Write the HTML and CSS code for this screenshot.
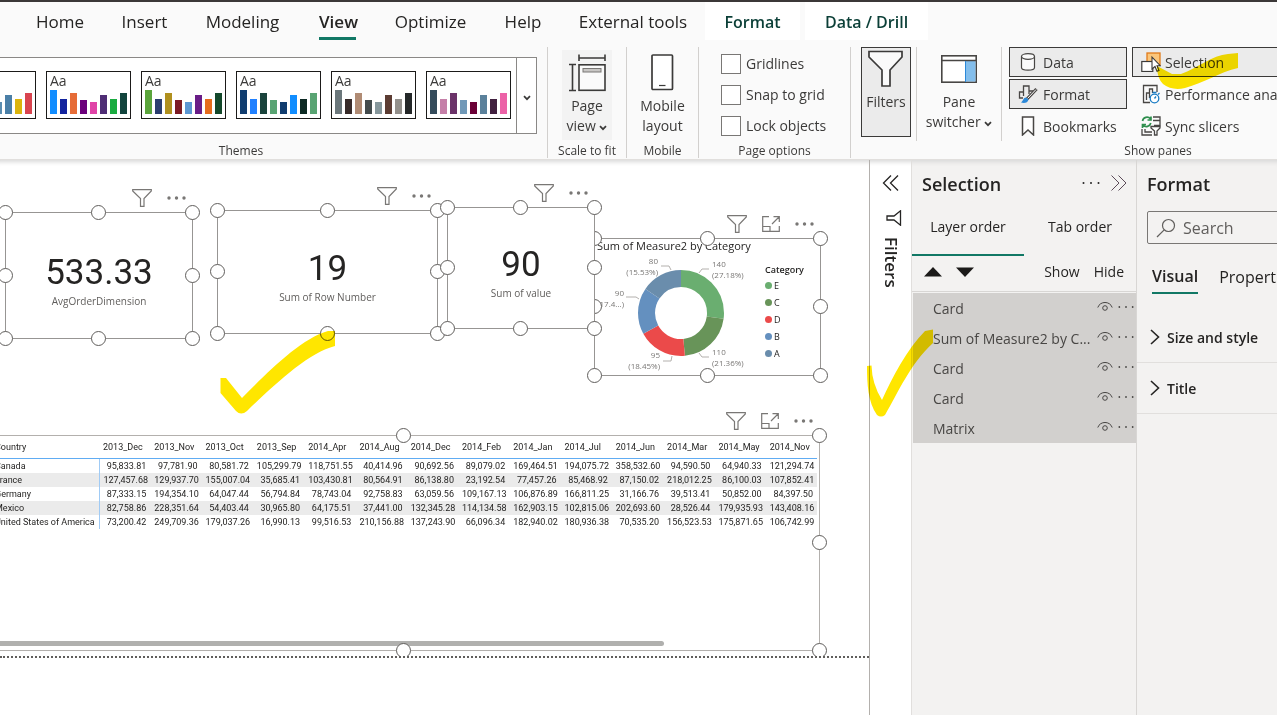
FILE: index.html
```html
<!DOCTYPE html>
<html lang="en">
<head>
<meta charset="utf-8">
<title>Report editor</title>
<link rel="stylesheet" href="styles.css">
</head>
<body>
<svg class="defs" aria-hidden="true">
  <symbol id="funnel" viewBox="0 0 20 18"><path d="M.7.7H19.3V2L12 9.500V17.300H8.500V9.500L.7 2Z" fill="#fff" stroke="currentColor" stroke-width="1.200"/></symbol>
  <symbol id="focus" viewBox="0 0 18 16"><path d="M7 .7H.7V15.300H17.300V10M11.500.7H17.300V6M17 1L10 8M.7 10.500H8V15" fill="none" stroke="currentColor" stroke-width="1.200"/></symbol>
  <symbol id="dots" viewBox="0 0 19 4"><g fill="currentColor"><circle cx="2" cy="2" r="1.700"/><circle cx="9.500" cy="2" r="1.700"/><circle cx="17" cy="2" r="1.700"/></g></symbol>
  <symbol id="smalldots" viewBox="0 0 18 4"><g fill="currentColor"><circle cx="1.500" cy="2" r="1"/><circle cx="9" cy="2" r="1"/><circle cx="16.500" cy="2" r="1"/></g></symbol>
  <symbol id="eye" viewBox="0 0 16 12"><path d="M.8 6.500C3-.2 13-.2 15.200 6.500" fill="none" stroke="currentColor"/><circle cx="8" cy="7" r="2.300" fill="none" stroke="currentColor"/></symbol>
  <symbol id="down" viewBox="0 0 8 6"><path d="M1 1.200L4 4.200L7 1.200" fill="none" stroke="currentColor" stroke-width="1.700"/></symbol>
  <symbol id="right" viewBox="0 0 10 16"><path d="M1 1L8.500 8L1 15" fill="none" stroke="currentColor" stroke-width="1.600"/></symbol>
</svg>

<nav class="tabs">
  <button class="tab">Home</button>
  <button class="tab">Insert</button>
  <button class="tab">Modeling</button>
  <button class="tab active"><span>View</span></button>
  <button class="tab">Optimize</button>
  <button class="tab">Help</button>
  <button class="tab">External tools</button>
  <button class="tab context">Format</button>
  <button class="tab context">Data / Drill</button>
</nav>

<section class="ribbon">
  <div class="group themes">
    <div class="gallery">
      <div class="thumbs" id="thumbs"></div>
      <button class="more" aria-label="More themes"><svg width="8" height="6"><use href="#down"/></svg></button>
    </div>
    <div class="label">Themes</div>
  </div>
  <div class="group scale">
    <button class="big hover">
      <svg width="38" height="38" viewBox="0 0 38 38" fill="none" stroke="#3b3a39" stroke-width="1.600"><path d="M11 .5V7M37 .5V7M11 4H37"/><path d="M1 10.500H8M1 36.500H8M4.500 10.500V36.500"/><rect x="11" y="10.800" width="26" height="25.500" fill="#fafafa"/><rect x="15" y="14.500" width="18" height="3.500" fill="#c8c6c4" stroke="#797775" stroke-width="1"/></svg>
      <span>Page<br>view <svg width="8" height="6"><use href="#down"/></svg></span>
    </button>
    <div class="label">Scale to fit</div>
  </div>
  <div class="group mobile">
    <button class="big">
      <svg width="24" height="38" viewBox="0 0 24 38" fill="none" stroke="#3b3a39" stroke-width="1.700"><rect x="1" y="1" width="20.500" height="34.500" rx="1" fill="#fff"/><path d="M8 31.500H14.500" stroke-width="1.200"/></svg>
      <span>Mobile<br>layout</span>
    </button>
    <div class="label">Mobile</div>
  </div>
  <div class="group options">
    <div class="checks">
      <label><input type="checkbox">Gridlines</label>
      <label><input type="checkbox">Snap to grid</label>
      <label><input type="checkbox">Lock objects</label>
    </div>
    <div class="label">Page options</div>
  </div>
  <div class="group panes">
    <div class="pane-row">
      <button class="big pressed">
        <svg width="36" height="38" viewBox="0 0 36 38"><path d="M1 1.500H34V7L22 20V36H14V20L1 7Z" fill="#fafafa" stroke="#3b3a39" stroke-width="1.700"/></svg>
        <span>Filters</span>
      </button>
      <button class="big switcher">
        <svg width="36" height="30" viewBox="0 0 36 30"><rect x=".8" y="1.800" width="34.400" height="26.400" fill="#fff" stroke="#484644" stroke-width="1.600"/><path d="M25 7H34.500V27.500H25Z" fill="#83beec"/><path d="M1 6.500H35" stroke="#484644" stroke-width="1.500"/><path d="M24.500 7V28" stroke="#2b88d8"/></svg>
        <span>Pane<br>switcher <svg width="8" height="6"><use href="#down"/></svg></span>
      </button>
      <div class="toggles">
        <button class="toggle on"><svg width="20" height="20" viewBox="0 0 20 20" fill="#fafafa" stroke="#484644" stroke-width="1.200"><path d="M3.500 4.500V15.500C3.500 19 16.500 19 16.500 15.500V4.500"/><ellipse cx="10" cy="4.500" rx="6.500" ry="2.800"/></svg>Data</button>
        <button class="toggle on wide"><svg width="20" height="20" viewBox="0 0 20 20"><rect x="6" y="1" width="13" height="12" fill="#fbc67b" stroke="#e07b1a" stroke-width="1.300"/><rect x=".8" y="9.500" width="11" height="10" fill="#fff" stroke="#3b3a39" stroke-width="1.200"/><path d="M11 5V17L14 14.500L16 19.300L18 18.400L16 13.700H19.300Z" fill="#fff" stroke="#3b3a39" stroke-width="1.100"/></svg>Selection</button>
        <button class="toggle on"><svg width="20" height="20" viewBox="0 0 20 20"><path d="M5 14H1.500V8H5.500V2H11V7H15M5.500 8V12M11 7V10" fill="none" stroke="#484644" stroke-width="1.300"/><path d="M18.500 5L9 15" stroke="#484644" stroke-width="3.200"/><path d="M18 5.500L9.500 14.500" stroke="#fff"/><path d="M10.500 15.500C10 19 6 19.500 3 18.500C5.500 17 5 13.500 8 13.500Z" fill="#2b88d8"/></svg>Format</button>
        <button class="toggle wide"><svg width="20" height="20" viewBox="0 0 20 20" fill="none" stroke="#484644" stroke-width="1.300"><path d="M9 18.500H2.500V1.500H16V8M5.500 16V9H8.500V5H11.500V9M8.500 9V14"/><g stroke="#1a7cc4"><circle cx="13.500" cy="14.500" r="4.300" fill="#fff"/><path d="M13.500 14.500L15 12.500M11.500 8.500H15.500M17 10.500L18.500 9"/></g></svg>Performance analyzer</button>
        <button class="toggle"><svg width="20" height="20" viewBox="0 0 20 20"><path d="M4.500 1H15.500V19L10 14L4.500 19Z" fill="#fff" stroke="#484644" stroke-width="1.500"/></svg>Bookmarks</button>
        <button class="toggle wide"><svg width="20" height="20" viewBox="0 0 20 20" fill="none" stroke="#484644" stroke-width="1.300"><path d="M1 13V19H11M4 13V16H11M12 1H19V9.500H13M12 4.500H19"/><path d="M10 10.500H19V12L16 15V19H13.500V15L10 12Z" fill="#fff"/><path d="M1.500 5A4.500 4.500 0 0 1 9.500 3M10 .5V4H6.500M9.800 7A4.500 4.500 0 0 1 2 9M1.500 12V8.500H5" stroke="#2f8f4e" stroke-width="1.700"/></svg>Sync slicers</button>
      </div>
    </div>
    <div class="label">Show panes</div>
  </div>
</section>

<main class="workspace">
  <section class="canvas">
    <div class="page">
      <article class="visual matrix">
        <div class="tools"><svg width="20" height="18"><use href="#funnel"/></svg><svg width="18" height="16"><use href="#focus"/></svg><svg width="19" height="4"><use href="#dots"/></svg></div>
        <table>
          <thead><tr id="months"><th class="country">Country</th></tr></thead>
          <tbody id="rows"></tbody>
        </table>
        <div class="scroll"></div>
      </article>
      <article class="visual card one">
        <div class="tools"><svg width="20" height="18"><use href="#funnel"/></svg><svg width="19" height="4"><use href="#dots"/></svg></div>
        <div class="value">533.33</div><div class="caption">AvgOrderDimension</div>
      </article>
      <article class="visual card two">
        <div class="tools"><svg width="20" height="18"><use href="#funnel"/></svg><svg width="19" height="4"><use href="#dots"/></svg></div>
        <div class="value">19</div><div class="caption">Sum of Row Number</div>
      </article>
      <article class="visual chart">
        <div class="tools"><svg width="20" height="18"><use href="#funnel"/></svg><svg width="18" height="16"><use href="#focus"/></svg><svg width="19" height="4"><use href="#dots"/></svg></div>
        <h3>Sum of Measure2 by Category</h3>
        <svg class="donut" viewBox="594 238 227 137">
          <g fill="none" stroke-width="17" transform="rotate(-90 681 313)">
            <circle cx="681" cy="313" r="34.500" pathLength="100" stroke="#6aae70" stroke-dasharray="27.180 72.820"/>
            <circle cx="681" cy="313" r="34.500" pathLength="100" stroke="#689459" stroke-dasharray="21.360 78.640" stroke-dashoffset="-27.180"/>
            <circle cx="681" cy="313" r="34.500" pathLength="100" stroke="#eb4a4a" stroke-dasharray="18.450 81.550" stroke-dashoffset="-48.540"/>
            <circle cx="681" cy="313" r="34.500" pathLength="100" stroke="#6490bf" stroke-dasharray="17.480 82.520" stroke-dashoffset="-66.990"/>
            <circle cx="681" cy="313" r="34.500" pathLength="100" stroke="#6a8dac" stroke-dasharray="15.530 84.470" stroke-dashoffset="-84.470"/>
          </g>
          <g fill="none" stroke="#b3b0ad"><path d="M661 266H669L671 270M699 273L702 269H709M626 297H636L639 299M663 361H671L672 356M699 353L702 357H709"/></g>
          <g class="data">
            <text x="712" y="267">140</text><text x="712" y="278">(27.18%)</text>
            <text x="712" y="355">110</text><text x="712" y="366">(21.36%)</text>
            <text x="658" y="264" text-anchor="end">80</text><text x="658" y="275" text-anchor="end">(15.53%)</text>
            <text x="624" y="296" text-anchor="end">90</text><text x="624" y="307" text-anchor="end">(17.4...)</text>
            <text x="660" y="358" text-anchor="end">95</text><text x="660" y="369" text-anchor="end">(18.45%)</text>
          </g>
        </svg>
        <div class="legend"><b>Category</b>
          <span><i class="e"></i>E</span><span><i class="c"></i>C</span><span><i class="d"></i>D</span><span><i class="b"></i>B</span><span><i class="a"></i>A</span>
        </div>
      </article>
      <article class="visual card three">
        <div class="tools"><svg width="20" height="18"><use href="#funnel"/></svg><svg width="19" height="4"><use href="#dots"/></svg></div>
        <div class="value">90</div><div class="caption">Sum of value</div>
      </article>
    </div>
  </section>

  <aside class="filters">
    <button aria-label="Expand filters"><svg width="18" height="16" viewBox="0 0 18 16" fill="none" stroke="#252423" stroke-width="1.300"><path d="M9 .5L1.500 8L9 15.500M16 .5L8.500 8L16 15.500"/></svg></button>
    <svg class="side-funnel" width="16" height="16" viewBox="0 0 16 16"><path d="M14.500 .8V15.200L8 10H1V6H8Z" fill="none" stroke="#252423" stroke-width="1.300"/></svg>
    <span>Filters</span>
  </aside>

  <aside class="selection">
    <header><h2>Selection</h2>
      <button aria-label="More options"><svg width="18" height="4"><use href="#smalldots"/></svg></button>
      <button aria-label="Collapse"><svg width="16" height="16" viewBox="0 0 16 16" fill="none" stroke="#5b4a58"><path d="M.5 .5L8 8L.5 15.500M7.500 .5L15 8L7.500 15.500"/></svg></button>
    </header>
    <div class="order"><button class="current">Layer order</button><button>Tab order</button></div>
    <div class="actions">
      <button aria-label="Move up"><svg width="18" height="10"><path d="M0 9.500L9 0L18 9.500Z" fill="#1b1a19"/></svg></button>
      <button aria-label="Move down"><svg width="18" height="10"><path d="M0 .5L9 10L18 .5Z" fill="#1b1a19"/></svg></button>
      <button class="show">Show</button><button>Hide</button>
    </div>
    <ul>
      <li><span>Card</span><svg width="16" height="12"><use href="#eye"/></svg><svg width="16" height="4"><use href="#smalldots"/></svg></li>
      <li><span>Sum of Measure2 by C...</span><svg width="16" height="12"><use href="#eye"/></svg><svg width="16" height="4"><use href="#smalldots"/></svg></li>
      <li><span>Card</span><svg width="16" height="12"><use href="#eye"/></svg><svg width="16" height="4"><use href="#smalldots"/></svg></li>
      <li><span>Card</span><svg width="16" height="12"><use href="#eye"/></svg><svg width="16" height="4"><use href="#smalldots"/></svg></li>
      <li><span>Matrix</span><svg width="16" height="12"><use href="#eye"/></svg><svg width="16" height="4"><use href="#smalldots"/></svg></li>
    </ul>
  </aside>

  <aside class="format">
    <h2>Format</h2>
    <label class="search"><svg width="20" height="20" viewBox="0 0 20 20" fill="none" stroke="#605e5c" stroke-width="1.200"><circle cx="12.500" cy="7.500" r="6"/><path d="M8.200 11.800L1 19"/></svg><input type="text" placeholder="Search" aria-label="Search"></label>
    <div class="kinds"><button class="current">Visual</button><button>Properties</button></div>
    <button class="section"><svg width="10" height="16"><use href="#right"/></svg>Size and style</button>
    <button class="section"><svg width="10" height="16"><use href="#right"/></svg>Title</button>
  </aside>
</main>

<svg class="marks" width="1277" height="715" aria-hidden="true"><g fill="#ffe600">
  <path d="M220.500 378H226L242 398C268 372 300 339 328 331H335V346C308 353 275 384 247 411Q241 416 236 411L220.500 393Z"/>
  <path d="M1157 66L1172 74H1181C1198 68 1212 55 1228 54L1238 53V68C1220 72 1204 83 1185 88Q1172 91 1163 84Q1157 78 1157 66Z"/>
  <path d="M867 366L871.500 365.500Q872 384 882 400C892 378 907 349 925 331L933 329.500V343C910 364 898 393 885 415Q881 418 877 415C868 402 867 384 867 366Z"/>
</g></svg>
<script src="script.js"></script>
</body>
</html>
```

FILE: styles.css
```css
* { box-sizing: border-box; }
body { margin: 0; height: 100vh; display: flex; flex-direction: column; overflow: hidden; background: #fff; color: #252423; font-family: "Open Sans", "Noto Sans", sans-serif; font-size: 14px; }
button { font: inherit; color: inherit; background: none; border: 0; padding: 0; }
svg { flex: none; }
h2, h3, ul { margin: 0; padding: 0; }
.defs { position: absolute; width: 0; height: 0; }
.marks { position: absolute; left: 0; top: 0; pointer-events: none; mix-blend-mode: multiply; }

.tabs { flex: none; display: grid; grid-template-columns: 86px 83px 113px 77px 109px 76px 144px 95px 123px; padding-left: 17px; border-top: 2px solid #3b3838; background: #fafafa; height: 40px; font-size: 17px; }
.tab { white-space: nowrap; line-height: 40px; height: 38px; }
.tab.active { font-weight: 600; }
.tab.active span { display: block; height: 38px; margin: 0 20px; border-bottom: 3px solid #117865; }
.tab.context { background: #fff; font-size: 16px; font-weight: 600; color: #0b3f37; }
.tab.context:last-child { margin-left: 5px; margin-right: -5px; }

.ribbon { flex: none; display: flex; height: 120px; padding: 7px 0 1px; overflow: hidden; background: #fafafa; border-bottom: 1px solid #e1dfdd; color: #3b3a39; }
.group { flex: none; display: flex; flex-direction: column; justify-content: space-between; align-items: center; border-right: 1px solid #d2d0ce; }
.group:last-child { border: 0; }
.label { font-size: 12px; line-height: 14px; white-space: nowrap; }
.themes { width: 548px; }
.themes .label { align-self: flex-start; width: 482px; text-align: center; }
.gallery { align-self: stretch; display: flex; justify-content: flex-end; height: 77px; margin: 10px 10px 0 0; border: 1px solid #8a8886; border-left: 0; background: #fff; overflow: hidden; }
.thumbs { flex: none; display: flex; gap: 10px; padding: 13px 5px; }
.thumb { flex: none; width: 85px; height: 48px; border: 1px solid #1b1a19; padding: 2px 3px 4px; display: flex; flex-direction: column; justify-content: space-between; font-size: 14px; line-height: 14px; }
.bars { display: flex; align-items: flex-end; gap: 3px; height: 24px; }
.bars i { width: 7px; }
.more { flex: none; width: 20px; border-left: 1px solid #8a8886; }
.scale { width: 79px; }
.mobile { width: 72px; }
.options { width: 152px; }
.panes { width: 614px; }
.big { display: flex; flex-direction: column; align-items: center; gap: 4px; width: 50px; height: 90px; padding-top: 5px; line-height: 20px; white-space: nowrap; }
.hover { background: #f3f3f3; margin-top: 3px; padding-top: 4px; }
.mobile .big { margin-top: 3px; padding-top: 4px; }
.pressed { background: #ebebeb; border: 1px solid #3b3a39; padding-top: 2px; gap: 4px; }
.checks { align-self: stretch; display: flex; flex-direction: column; gap: 11px; padding: 7px 0 0 22px; }
.checks label { display: flex; align-items: center; gap: 5px; line-height: 20px; white-space: nowrap; }
.checks input { appearance: none; width: 20px; height: 20px; margin: 0; border: 1px solid #797775; background: #fff; }
.pane-row { display: flex; align-items: flex-start; align-self: stretch; padding-left: 10px; }
.pane-row .switcher { border: solid #d2d0ce; border-width: 0 1px; margin-left: 5px; width: 86px; height: 94px; padding-top: 7px; gap: 8px; }
.toggles { display: grid; grid-template-columns: 118px 318px; grid-auto-rows: 30px; gap: 2px 5px; padding-left: 7px; }
.toggle { display: flex; align-items: center; gap: 5px; padding-left: 8px; border: 1px solid transparent; white-space: nowrap; }
.toggle.on { background: #ebebeb; border-color: #3b3a39; }
.toggle.wide { gap: 4px; }

.workspace { flex: 1; min-height: 0; display: flex; }
.canvas { position: relative; flex: 1; min-width: 0; overflow: hidden; border-right: 1px solid #b3b0ad; box-shadow: inset 0 6px 4px -4px #d8d8d8; }
.page { position: relative; height: 498px; overflow: hidden; border-bottom: 2px dotted #605e5c; }
.visual { position: absolute; border: 1px solid #979593; background: #fff; }
.handle { position: absolute; width: 15px; height: 15px; margin: -8px; border: 1px solid #605e5c; border-radius: 50%; background: #fff; }
.hl { left: 0; } .hc { left: 50%; } .hr { left: 100%; margin-left: -7px; }
.ht { top: 0; } .hm { top: 50%; } .hb { top: 100%; margin-top: -7px; }
.tools { position: absolute; right: 6px; bottom: 100%; display: flex; align-items: center; gap: 15px; height: 31px; color: #797775; }
.card { display: flex; flex-direction: column; align-items: center; justify-content: center; padding-top: 10px; }
.one { left: 5px; top: 52px; width: 188px; height: 127px; }
.two { left: 217px; top: 50px; width: 221px; height: 124px; }
.three { left: 447px; top: 47px; width: 148px; height: 122px; }
.value { font: 35px/40px Roboto, sans-serif; }
.caption { font-size: 10px; line-height: 16px; color: #605e5c; }
.chart { left: 594px; top: 78px; width: 227px; height: 138px; }
.chart h3 { font-size: 11px; line-height: 14px; font-weight: 400; padding-left: 2px; white-space: nowrap; }
.donut { position: absolute; left: -1px; top: -1px; width: 227px; height: 137px; }
.data { font-size: 8px; fill: #797775; }
.legend { position: absolute; left: 170px; top: 24px; display: flex; flex-direction: column; font-size: 9px; line-height: 14px; }
.legend span { display: flex; align-items: center; gap: 2px; height: 17px; }
.legend b { font-weight: 600; }
.legend i { width: 7px; height: 7px; border-radius: 50%; }
.e { background: #6aae70; } .c { background: #689459; } .d { background: #eb4a4a; } .b { background: #6490bf; } .a { background: #6a8dac; }
.matrix { left: -12px; top: 275px; width: 832px; height: 216px; border-color: #b3b0ad; }
table { table-layout: fixed; border-collapse: collapse; width: 828px; font: 9px/12px Roboto, sans-serif; color: #252423; }
th, td { padding: 1px 4px; font-weight: 400; white-space: nowrap; text-align: right; }
th { text-align: left; height: 22px; border-bottom: 1px solid #60acf3; }
.country { width: 110px; padding-left: 6px; text-align: left; border-right: 1px solid #a0cbf5; }
th.country { border-right: 0; }
tbody tr:nth-child(even) { background: #ebebeb; }
.scroll { position: absolute; left: 0; bottom: 4px; width: 675px; height: 5px; border-radius: 3px; background: #b0b0ae; }

.filters { flex: none; width: 41px; display: flex; flex-direction: column; align-items: center; padding-top: 15px; gap: 19px; box-shadow: inset 0 6px 4px -4px #d8d8d8; }
.filters button { height: 16px; }
.side-funnel { margin-left: 6px; }
.filters span { writing-mode: vertical-rl; font-size: 17px; font-weight: 600; line-height: 20px; margin-top: -8px; }
.selection { flex: none; width: 226px; background: #f3f2f1; border-left: 1px solid #e1dfdd; border-right: 1px solid #d8d6d4; box-shadow: inset 0 6px 4px -4px #d8d8d8; }
.selection button svg { display: block; }
.selection header { display: flex; align-items: center; gap: 11px; height: 48px; padding: 0 9px 2px 10px; }
h2 { flex: 1; font-size: 18px; font-weight: 600; line-height: 48px; padding-top: 1px; }
.order { display: grid; grid-template-columns: 1fr 1fr; height: 48px; }
.order button { height: 48px; padding-bottom: 12px; }
.order .current { border-bottom: 2px solid #117865; padding-bottom: 10px; }
.actions { display: flex; align-items: center; gap: 14px; height: 36px; padding: 0 12px 4px; border-bottom: 1px solid #d8d6d4; }
.show { margin-left: auto; }
.selection ul { list-style: none; margin: 1px 0 0 1px; background: #d2d0ce; }
.selection li { display: flex; align-items: center; height: 30px; gap: 5px; padding: 0 2px 0 20px; color: #484644; white-space: nowrap; }
.selection li svg { margin-bottom: 2px; }
.selection li span { flex: 1; min-width: 0; overflow: hidden; }
.format { flex: none; width: 140px; overflow: hidden; background: #f3f2f1; box-shadow: inset 0 6px 4px -4px #d8d8d8; }
.format h2 { padding: 0 0 0 10px; }
.search { display: flex; align-items: center; gap: 5px; width: 190px; height: 33px; margin: 3px 0 0 10px; padding-left: 8px; border: 1px solid #797775; border-radius: 2px; }
.search input { border: 0; background: none; font: inherit; font-size: 16px; width: 130px; }
.search input::placeholder { color: #605e5c; opacity: 1; }
.kinds { display: flex; gap: 21px; height: 68px; padding: 16px 0 0 15px; font-size: 16px; }
.kinds button { height: 34px; white-space: nowrap; }
.kinds .current { font-weight: 600; border-bottom: 2px solid #117865; }
.section { display: flex; align-items: center; gap: 7px; width: 200px; height: 51px; padding-left: 13px; border-bottom: 1px solid #e1dfdd; font-weight: 600; }
```

FILE: script.js
```javascript
const palettes = [
  ["#118dff", "#12239e", "#e66c37", "#6b007b", "#5b8db0", "#4a7fa7", "#dbb40c", "#d9444f"],
  ["#118dff", "#12239e", "#e66c37", "#6b007b", "#e044a7", "#4f2d75", "#1aab40", "#12443d"],
  ["#5aa43b", "#2b3d6f", "#b0901e", "#7b1b25", "#5b97d3", "#691d87", "#e66c1c", "#14482b"],
  ["#103c6e", "#2080ff", "#1a433c", "#59a473", "#103c6e", "#118dff", "#0c2923", "#59a473"],
  ["#6b777b", "#372a29", "#b08b74", "#434b4d", "#86979c", "#5c3c33", "#93908c", "#252829"],
  ["#344b5b", "#c57fa8", "#6b3369", "#7099b8", "#6b0036", "#5b819b", "#41203f", "#ec62a7"]
];
const heights = [24, 15, 21, 14, 12, 19, 15, 21];
document.getElementById("thumbs").innerHTML = palettes.map((p, n) =>
  `<div class="thumb">${n ? "Aa" : "<span></span>"}<div class="bars">${p.map((c, i) => `<i style="background:${c};height:${heights[i]}px"></i>`).join("")}</div></div>`).join("");

const months = "2013_Dec 2013_Nov 2013_Oct 2013_Sep 2014_Apr 2014_Aug 2014_Dec 2014_Feb 2014_Jan 2014_Jul 2014_Jun 2014_Mar 2014_May 2014_Nov";
const data = [
  ["Canada", "95,833.81 97,781.90 80,581.72 105,299.79 118,751.55 40,414.96 90,692.56 89,079.02 169,464.51 194,075.72 358,532.60 94,590.50 64,940.33 121,294.74"],
  ["France", "127,457.68 129,937.70 155,007.04 35,685.41 103,430.81 80,564.91 86,138.80 23,192.54 77,457.26 85,468.92 87,150.02 218,012.25 86,100.03 107,852.41"],
  ["Germany", "87,333.15 194,354.10 64,047.44 56,794.84 78,743.04 92,758.83 63,059.56 109,167.13 106,876.89 166,811.25 31,166.76 39,513.41 50,852.00 84,397.50"],
  ["Mexico", "82,758.86 228,351.64 54,403.44 30,965.80 64,175.51 37,441.00 132,345.28 114,134.58 162,903.15 102,815.06 202,693.60 28,526.44 179,935.93 143,408.16"],
  ["United States of America", "73,200.42 249,709.36 179,037.26 16,990.13 99,516.53 210,156.88 137,243.90 66,096.34 182,940.02 180,936.38 70,535.20 156,523.53 175,871.65 106,742.99"]
];
document.getElementById("months").insertAdjacentHTML("beforeend", months.split(" ").map(m => `<th>${m}</th>`).join(""));
document.getElementById("rows").innerHTML = data.map(([name, values]) =>
  `<tr><td class="country">${name}</td>${values.split(" ").map(v => `<td>${v}</td>`).join("")}</tr>`).join("");

// Resize handles on every edge and corner of a selected visual
document.querySelectorAll(".visual").forEach(visual => {
  for (const y of ["ht", "hm", "hb"]) for (const x of ["hl", "hc", "hr"]) {
    if (y === "hm" && x === "hc") continue;
    visual.insertAdjacentHTML("beforeend", `<span class="handle ${y} ${x}"></span>`);
  }
});
```
